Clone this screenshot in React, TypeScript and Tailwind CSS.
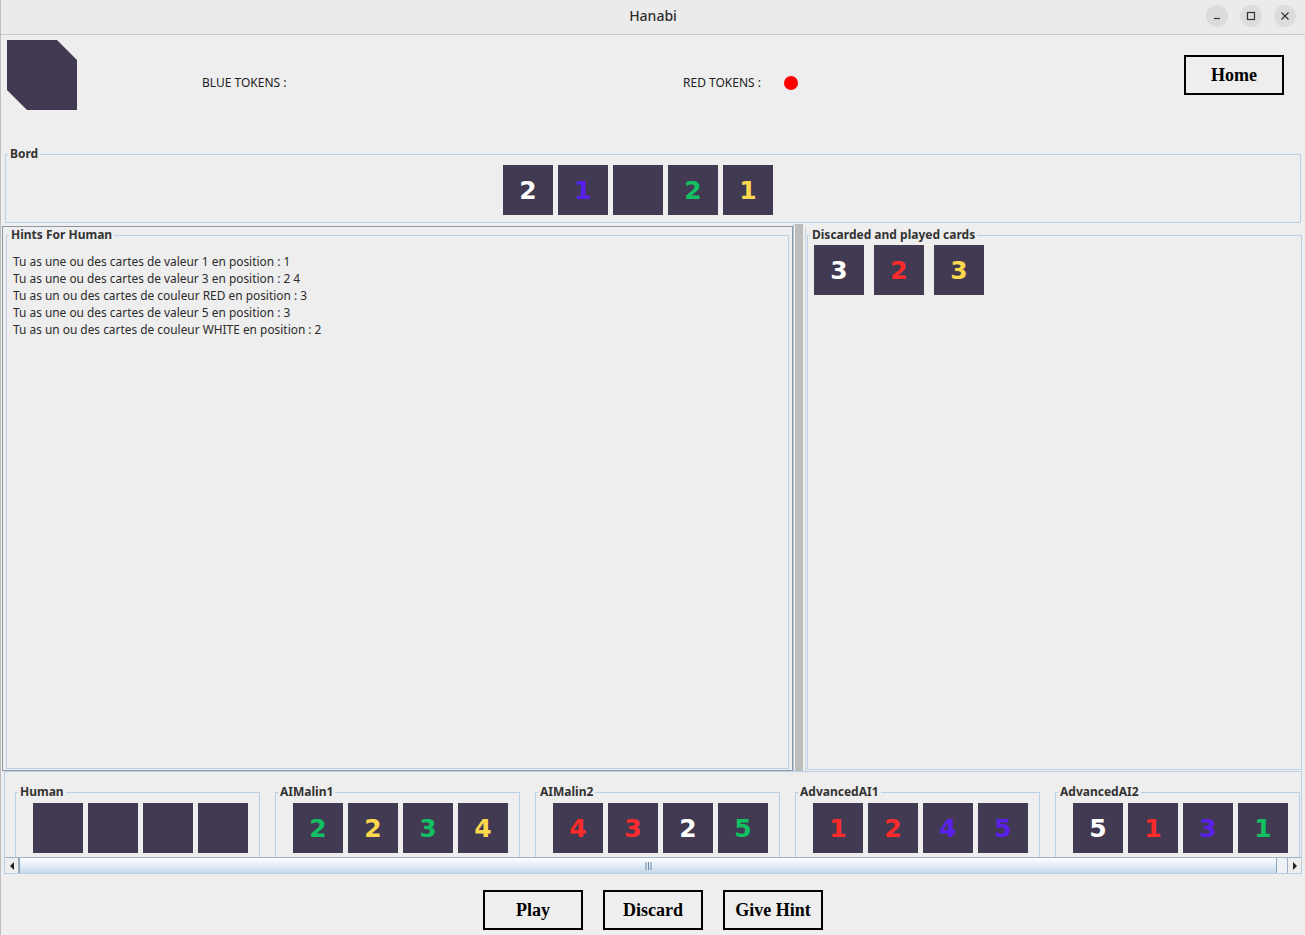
import type { ReactNode } from "react";

type CardColor = "white" | "blue" | "green" | "yellow" | "red" | "none";

type CardData = { value?: number; color: CardColor };

const digitColor: Record<CardColor, string> = {
  white: "text-white",
  blue: "text-[#5b1fec]",
  green: "text-[#12c062]",
  yellow: "text-[#fdd84c]",
  red: "text-[#ff2b2b]",
  none: "text-transparent",
};

const board: CardData[] = [
  { value: 2, color: "white" },
  { value: 1, color: "blue" },
  { color: "none" },
  { value: 2, color: "green" },
  { value: 1, color: "yellow" },
];

const discarded: CardData[] = [
  { value: 3, color: "white" },
  { value: 2, color: "red" },
  { value: 3, color: "yellow" },
];

const hints = [
  "Tu as une ou des cartes de valeur 1 en position : 1",
  "Tu as une ou des cartes de valeur 3 en position : 2 4",
  "Tu as un ou des cartes de couleur RED en position : 3",
  "Tu as une ou des cartes de valeur 5 en position : 3",
  "Tu as un ou des cartes de couleur WHITE en position : 2",
];

const players: { name: string; cards: CardData[] }[] = [
  { name: "Human", cards: [{ color: "none" }, { color: "none" }, { color: "none" }, { color: "none" }] },
  {
    name: "AIMalin1",
    cards: [
      { value: 2, color: "green" },
      { value: 2, color: "yellow" },
      { value: 3, color: "green" },
      { value: 4, color: "yellow" },
    ],
  },
  {
    name: "AIMalin2",
    cards: [
      { value: 4, color: "red" },
      { value: 3, color: "red" },
      { value: 2, color: "white" },
      { value: 5, color: "green" },
    ],
  },
  {
    name: "AdvancedAI1",
    cards: [
      { value: 1, color: "red" },
      { value: 2, color: "red" },
      { value: 4, color: "blue" },
      { value: 5, color: "blue" },
    ],
  },
  {
    name: "AdvancedAI2",
    cards: [
      { value: 5, color: "white" },
      { value: 1, color: "red" },
      { value: 3, color: "blue" },
      { value: 1, color: "green" },
    ],
  },
];

function Card({ card }: { card: CardData }) {
  return (
    <div className="w-[50px] h-[50px] shrink-0 bg-[#413a52] flex items-center justify-center">
      <span
        className={`font-['DejaVu_Sans',sans-serif] font-bold text-[25px] leading-none ${digitColor[card.color]}`}
      >
        {card.value ?? ""}
      </span>
    </div>
  );
}

function Titled({ title, className, children }: { title: string; className?: string; children: ReactNode }) {
  return (
    <fieldset className={`border border-[#b9d0e6] min-w-0 ${className ?? ""}`}>
      <legend className="ml-[2px] px-[2px] text-[12px] leading-[16px] font-bold text-[#333333]">
        {title}
      </legend>
      {children}
    </fieldset>
  );
}

function SwingButton({ label, className }: { label: string; className?: string }) {
  return (
    <button
      className={`w-[100px] h-[40px] border-2 border-black bg-[#eeeeee] font-['Liberation_Serif',serif] font-bold text-[18px] text-black ${className ?? ""}`}
    >
      {label}
    </button>
  );
}

function TitleBar() {
  return (
    <div className="h-[35px] shrink-0 bg-[#ebebeb] border-b border-[#c9c9c9] grid grid-cols-[1fr_auto_1fr] items-center">
      <div />
      <span className="text-[14px] leading-[18px] pb-[2px] text-[#2e2e2e] font-medium">Hanabi</span>
      <div className="flex justify-end gap-[12px] pr-[9px] pb-[2px]">
        <div className="w-[22px] h-[22px] rounded-full bg-[#dcdcdc] flex items-center justify-center">
          <svg width="10" height="10" viewBox="0 0 10 10">
            <path d="M2 7.5h6" stroke="#333" strokeWidth="1.2" />
          </svg>
        </div>
        <div className="w-[22px] h-[22px] rounded-full bg-[#dcdcdc] flex items-center justify-center">
          <svg width="10" height="10" viewBox="0 0 10 10">
            <rect x="1.5" y="1.5" width="7" height="7" fill="none" stroke="#333" strokeWidth="1.2" />
          </svg>
        </div>
        <div className="w-[22px] h-[22px] rounded-full bg-[#dcdcdc] flex items-center justify-center">
          <svg width="10" height="10" viewBox="0 0 10 10">
            <path d="M1.5 1.5l7 7M8.5 1.5l-7 7" stroke="#333" strokeWidth="1.2" />
          </svg>
        </div>
      </div>
    </div>
  );
}

function Scrollbar() {
  return (
    <div className="h-[16px] flex items-stretch border-t border-[#9fb1c4] bg-[#eef2f6]">
      <div className="w-[14px] border-r border-[#9fb1c4] bg-[#eeeeee] flex items-center justify-center">
        <svg width="6" height="8" viewBox="0 0 6 8">
          <path d="M5 0L1 4l4 4z" fill="#222" />
        </svg>
      </div>
      <div className="w-[1258px] border-x border-[#8da3ba] bg-gradient-to-b from-[#ffffff] via-[#e3edf7] to-[#c5d6e8] flex items-center justify-center">
        <svg width="7" height="8" viewBox="0 0 7 8">
          <path d="M1 0v8M3.5 0v8M6 0v8" stroke="#6f87a0" strokeWidth="1" />
        </svg>
      </div>
      <div className="flex-1" />
      <div className="w-[14px] border-l border-[#9fb1c4] bg-[#eeeeee] flex items-center justify-center">
        <svg width="6" height="8" viewBox="0 0 6 8">
          <path d="M1 0l4 4-4 4z" fill="#222" />
        </svg>
      </div>
    </div>
  );
}

export default function App() {
  return (
    <div className="w-[1305px] h-[935px] overflow-hidden bg-[#eeeeee] flex flex-col font-['Noto_Sans',sans-serif] text-[#222222] border-l border-[#bdbdbd]">
      <TitleBar />

      {/* header: logo, tokens, home */}
      <div className="h-[111px] shrink-0 flex items-start">
        <div className="ml-[6px] mt-[5px] w-[70px] h-[70px] bg-[#413a52] [clip-path:polygon(0_0,50px_0,70px_20px,70px_70px,20px_70px,0_50px)]" />
        <div className="ml-[125px] mt-[40px] w-[481px] text-[12px] leading-[16px]">BLUE TOKENS :</div>
        <div className="mt-[40px] w-[101px] text-[12px] leading-[16px]">RED TOKENS :</div>
        <div className="mt-[41px] w-[14px] h-[14px] rounded-full bg-[#ff0000]" />
        <SwingButton label="Home" className="ml-auto mr-[21px] mt-[20px] text-[17px]" />
      </div>

      {/* board */}
      <div className="shrink-0 px-[4px] pb-[1px]">
        <Titled title="Bord">
          <div className="flex justify-center gap-[5px] pt-[3px] pb-[7px] pr-[30px]">
            {board.map((c, i) => (
              <Card key={i} card={c} />
            ))}
          </div>
        </Titled>
      </div>

      {/* split pane */}
      <div className="h-[547px] shrink-0 flex pl-[1px] pr-[3px]">
        <div className="w-[791px] mt-[2px] border border-[#8b98a6] px-[3px] pb-[1px] flex">
          <Titled title="Hints For Human" className="flex-1">
            <div className="pl-[6px] pt-[10px] text-[11.9px] leading-[17px] text-[#2b2b2b]">
              {hints.map((h) => (
                <div key={h}>{h}</div>
              ))}
            </div>
          </Titled>
        </div>
        <div className="w-[12px] flex border-l border-[#b3c6d9]">
          <div className="ml-[1px] w-[8px] bg-[#bdbdbd]" />
        </div>
        <div className="flex-1 border-l border-[#c6d6e6] pl-[1px] mt-[3px] pb-[1px] flex">
          <Titled title="Discarded and played cards" className="flex-1">
            <div className="flex gap-[10px] pl-[6px] pt-[2px]">
              {discarded.map((c, i) => (
                <Card key={i} card={c} />
              ))}
            </div>
          </Titled>
        </div>
      </div>

      {/* players scroll pane */}
      <div className="shrink-0 mx-[3px] border border-[#b9d0e6] flex flex-col">
        <div className="h-[85px] overflow-hidden flex gap-[15px] pl-[10px] pt-[12px]">
          {players.map((p) => (
            <Titled key={p.name} title={p.name} className="w-[245px] shrink-0 self-start">
              <div className="flex gap-[5px] pl-[17px] pt-[3px] pb-[6px]">
                {p.cards.map((c, i) => (
                  <Card key={i} card={c} />
                ))}
              </div>
            </Titled>
          ))}
        </div>
        <Scrollbar />
      </div>

      {/* actions */}
      <div className="flex justify-center gap-[20px] pt-[16px]">
        <SwingButton label="Play" />
        <SwingButton label="Discard" />
        <SwingButton label="Give Hint" />
      </div>
    </div>
  );
}
